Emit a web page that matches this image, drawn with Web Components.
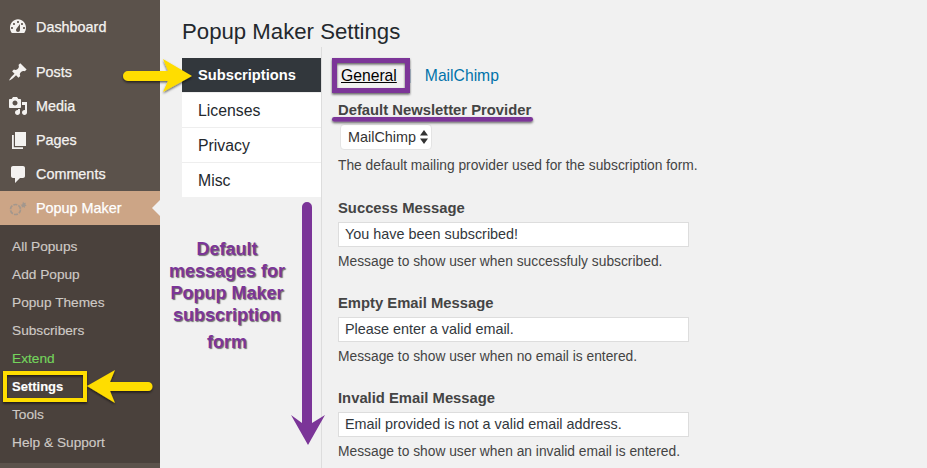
<!DOCTYPE html>
<html>
<head>
<meta charset="utf-8">
<title>Popup Maker Settings</title>
<style>
  html, body { margin: 0; height: 468px; overflow: hidden; background: #f1f1f1; }
  body { font-family: "Liberation Sans", Arial, sans-serif; color: #444; }
</style>
</head>
<body>
<settings-page>
  <admin-sidebar slot="sidebar">
    <menu-item icon="dashboard" class="first">Dashboard</menu-item>
    <menu-item icon="pin">Posts</menu-item>
    <menu-item icon="media">Media</menu-item>
    <menu-item icon="pages">Pages</menu-item>
    <menu-item icon="comment">Comments</menu-item>
    <menu-item icon="popup" current>Popup Maker</menu-item>
    <sub-menu>
      <sub-item>All Popups</sub-item>
      <sub-item>Add Popup</sub-item>
      <sub-item>Popup Themes</sub-item>
      <sub-item>Subscribers</sub-item>
      <sub-item tone="green">Extend</sub-item>
      <sub-item tone="current">Settings</sub-item>
      <sub-item>Tools</sub-item>
      <sub-item>Help &amp; Support</sub-item>
    </sub-menu>
  </admin-sidebar>

  <vertical-tabs slot="tabs">
    <tab-item active>Subscriptions</tab-item>
    <tab-item>Licenses</tab-item>
    <tab-item>Privacy</tab-item>
    <tab-item>Misc</tab-item>
  </vertical-tabs>

  <sub-tabs slot="subtabs"></sub-tabs>

  <select-field label="Default Newsletter Provider" value="MailChimp" hint="The default mailing provider used for the subscription form."></select-field>
  <text-field label="Success Message" value="You have been subscribed!" hint="Message to show user when successfuly subscribed."></text-field>
  <text-field label="Empty Email Message" value="Please enter a valid email." hint="Message to show user when no email is entered."></text-field>
  <text-field label="Invalid Email Message" value="Email provided is not a valid email address." hint="Message to show user when an invalid email is entered."></text-field>
</settings-page>
<markup-layer></markup-layer>

<script>
const ICONS = {
  dashboard: '<path fill-rule="evenodd" d="M3.76 16h12.48C17.34 14.57 18 12.79 18 10.86c0-4.71-3.58-8.53-8-8.53s-8 3.82-8 8.53c0 1.93.66 3.71 1.76 5.14zM10 4c.55 0 1 .45 1 1s-.45 1-1 1-1-.45-1-1 .45-1 1-1zM6 6c.55 0 1 .45 1 1s-.45 1-1 1-1-.45-1-1 .45-1 1-1zm8 0c.55 0 1 .45 1 1s-.45 1-1 1-1-.45-1-1 .45-1 1-1zm-5.37 5.55L12 7v6c0 1.1-.9 2-2 2s-2-.9-2-2c0-.57.24-1.08.63-1.45zM4 10c.55 0 1 .45 1 1s-.45 1-1 1-1-.45-1-1 .45-1 1-1zm12 0c.55 0 1 .45 1 1s-.45 1-1 1-1-.45-1-1 .45-1 1-1z"/>',
  pin: '<path d="M10.44 3.02l1.82-1.82 6.36 6.35-1.83 1.82c-1.05-.68-2.48-.57-3.41.36l-.75.75c-.92.93-1.04 2.35-.35 3.41l-1.83 1.82-2.41-2.41-2.8 2.79c-.42.42-3.38 2.71-3.8 2.29s1.86-3.39 2.28-3.81l2.79-2.79L4.1 9.36l1.83-1.82c1.05.69 2.48.57 3.4-.36l.75-.75c.93-.92 1.05-2.35.36-3.41z"/>',
  media: '<path fill-rule="evenodd" d="M13 11V4c0-.55-.45-1-1-1h-1.67L9 1H5L3.67 3H2c-.55 0-1 .45-1 1v7c0 .55.45 1 1 1h10c.55 0 1-.45 1-1zM7 4.5c1.38 0 2.5 1.12 2.5 2.5S8.38 9.5 7 9.5 4.5 8.38 4.5 7 5.62 4.5 7 4.5z"/><path d="M14 6h5v10.500c0 1.380-1.120 2.500-2.500 2.500S14 17.880 14 16.500s1.120-2.500 2.500-2.500c.17 0 .34.020.5.050V9h-3V6zm-4 8.050V13h2v3.500c0 1.380-1.120 2.500-2.500 2.500S7 17.880 7 16.500 8.120 14 9.500 14c.17 0 .34.020.5.050z"/>',
  pages: '<path d="M7 2h11v14H7z"/><path d="M4 5h1.800v12.200H15V19H4z"/>',
  comment: '<path d="M5 2h10c1.100 0 2 .9 2 2v8c0 1.100-.9 2-2 2h-3l-5 5v-5H5c-1.100 0-2-.9-2-2V4c0-1.100.9-2 2-2z"/>',
  popup: '<circle cx="7.500" cy="11.500" r="5" fill="none" stroke="currentColor" stroke-width="1.700" stroke-dasharray="4 1.200"/><path d="M15 3.500l1 1.500 1.800-.2-.4 1.700 1.300 1.200-1.700.6-.3 1.700-1.500-1-1.600.8.200-1.800-1.300-1.200 1.800-.4z"/>'
};

class SettingsPage extends HTMLElement {
  constructor() {
    super();
    this.attachShadow({ mode: 'open' }).innerHTML = `
      <style>
        :host { display: flex; width: 927px; height: 468px; overflow: hidden; }
        #main { flex: 1; padding: 18px 0 0 22px; min-width: 0; }
        h1 { margin: 0; height: 29px; font-size: 22.200px; line-height: 27px; font-weight: 400; color: #23282d; }
        #panel { display: flex; }
        #content { flex: 1; padding: 11px 0 0 16px; border-left: 1px solid #ddd; height: 421px; box-sizing: border-box; }
      </style>
      <slot name="sidebar"></slot>
      <div id="main">
        <h1>Popup Maker Settings</h1>
        <div id="panel">
          <slot name="tabs"></slot>
          <div id="content">
            <slot name="subtabs"></slot>
            <slot></slot>
          </div>
        </div>
      </div>`;
  }
}

class AdminSidebar extends HTMLElement {
  constructor() {
    super();
    this.attachShadow({ mode: 'open' }).innerHTML = `
      <style>
        :host { display: block; flex: none; width: 160px; height: 468px; background: #5b524b; padding-top: 10px; box-sizing: border-box; }
        ::slotted(.first) { margin-bottom: 11px; }
      </style>
      <slot></slot>`;
  }
}

class MenuItem extends HTMLElement {
  connectedCallback() {
    if (this.shadowRoot) return;
    const icon = ICONS[this.getAttribute('icon')] || '';
    this.attachShadow({ mode: 'open' }).innerHTML = `
      <style>
        :host { display: flex; position: relative; align-items: center; height: 34px; color: #f4f2f0; font-size: 14.400px; -webkit-text-stroke: 0.25px currentColor; }
        :host([current]) { background: #cca586; color: #fff; }
        :host([current]) svg { color: #a3978d; fill: #a3978d; }
        svg { width: 20px; height: 20px; margin: 0 8px; fill: #f4f2f0; flex: none; }
        :host([current])::after { content: ""; position: absolute; right: 0; top: 9px; border: 8px solid transparent; border-right-color: #f1f1f1; border-left-width: 0; }
      </style>
      <svg viewBox="0 0 20 20">${icon}</svg><slot></slot>`;
  }
}

class SubMenu extends HTMLElement {
  constructor() {
    super();
    this.attachShadow({ mode: 'open' }).innerHTML = `
      <style>:host { display: block; background: #4a413c; padding: 8px 0 6px; }</style>
      <slot></slot>`;
  }
}

class SubItem extends HTMLElement {
  constructor() {
    super();
    this.attachShadow({ mode: 'open' }).innerHTML = `
      <style>
        :host { display: block; height: 28px; line-height: 28px; padding-left: 12px; font-size: 13.700px; color: #cfcac6; -webkit-text-stroke: 0.15px currentColor; }
        :host([tone="green"]) { color: #74d45c; }
        :host([tone="current"]) { color: #fff; font-weight: 700; font-size: 13px; }
      </style>
      <slot></slot>`;
  }
}

class VerticalTabs extends HTMLElement {
  constructor() {
    super();
    this.attachShadow({ mode: 'open' }).innerHTML = `
      <style>:host { display: block; flex: none; width: 139px; margin-top: 11px; align-self: flex-start; background: #fff; }</style>
      <slot></slot>`;
  }
}

class TabItem extends HTMLElement {
  constructor() {
    super();
    this.attachShadow({ mode: 'open' }).innerHTML = `
      <style>
        :host { display: block; height: 34px; line-height: 36px; padding-left: 16px; font-size: 15.800px; color: #23282d; border-bottom: 1px solid #eee; background: #fff; }
        :host(:last-child) { border-bottom: 0; }
        :host([active]) { background: #32373c; color: #fff; font-weight: 700; font-size: 14.700px; line-height: 34px; }
      </style>
      <slot></slot>`;
  }
}

class SubTabs extends HTMLElement {
  constructor() {
    super();
    this.attachShadow({ mode: 'open' }).innerHTML = `
      <style>
        :host { display: flex; align-items: center; height: 34px; padding-top: 2px; box-sizing: border-box; font-size: 15.700px; }
        a { color: #0073aa; text-decoration: none; }
        a.on { color: #000; text-decoration: underline; margin-left: 3px; }
        i { width: 1px; height: 14px; background: #bcd; margin: 0 14px 0 13px; }
      </style>
      <a class="on">General</a><i></i><a>MailChimp</a>`;
  }
}

const fieldStyles = `
  :host { display: block; font-size: 13.800px; color: #444; }
  label { display: block; font-size: 14.800px; font-weight: 700; line-height: 18px; color: #444; }
  p { margin: 0; line-height: 18px; }
`;

class SelectField extends HTMLElement {
  connectedCallback() {
    if (this.shadowRoot) return;
    this.attachShadow({ mode: 'open' }).innerHTML = `
      <style>${fieldStyles}
        :host { height: 89px; padding-top: 9px; box-sizing: border-box; }
        #box { display: flex; align-items: center; justify-content: space-between; width: 92px; height: 26px; margin: 5px 0 7px 2px; box-sizing: border-box; padding: 0 3px 0 7px; background: #fff; border: 1px solid #e4e4e4; border-radius: 4px; font-size: 14.400px; color: #333; }
        svg { width: 8px; height: 14px; fill: #333; }
      </style>
      <label>${this.getAttribute('label')}</label>
      <div id="box">${this.getAttribute('value')}<svg viewBox="0 0 8 14"><path d="M4 0l4 5.500H0zM4 14L0 8.500h8z"/></svg></div>
      <p>${this.getAttribute('hint')}</p>`;
  }
}

class TextField extends HTMLElement {
  connectedCallback() {
    if (this.shadowRoot) return;
    this.attachShadow({ mode: 'open' }).innerHTML = `
      <style>${fieldStyles}
        :host { height: 95px; padding-top: 18px; box-sizing: border-box; }
        #input { width: 351px; height: 25px; line-height: 23px; margin: 5px 0 6px; box-sizing: border-box; padding: 0 6px; background: #fff; border: 1px solid #ddd; font-size: 14.400px; color: #32373c; }
      </style>
      <label>${this.getAttribute('label')}</label>
      <div id="input">${this.getAttribute('value')}</div>
      <p>${this.getAttribute('hint')}</p>`;
  }
}

// hand drawn annotations sit on top of the screenshot
class MarkupLayer extends HTMLElement {
  constructor() {
    super();
    this.attachShadow({ mode: 'open' }).innerHTML = `
      <style>
        :host { position: absolute; left: 0; top: 0; width: 927px; height: 468px; pointer-events: none; }
        svg { position: absolute; left: 0; top: 0; }
        #note { position: absolute; left: 167px; top: 238px; width: 120px; text-align: center; font-size: 18px; font-weight: 700; line-height: 22px; color: #7b3598; text-shadow: 1px 1px 1px rgba(0,0,0,.55), 0 0 2px rgba(255,255,255,.6); }
        #note div { margin-top: 5px; }
      </style>
      <svg width="927" height="468" viewBox="0 0 927 468">
        <defs>
          <filter id="s" x="-20%" y="-20%" width="140%" height="140%">
            <feDropShadow dx="0" dy="1.500" stdDeviation="1.200" flood-color="#000" flood-opacity=".6"/>
          </filter>
        </defs>
        <g filter="url(#s)">
          <path fill="#ffdd00" d="M128 71H168L163 59 192 76 163 92 168 81H128a5 5 0 0 1 0-10z"/>
          <rect x="5" y="373" width="80" height="27" fill="none" stroke="#ffdd00" stroke-width="4"/>
          <path fill="#ffdd00" d="M148 382H110L115 370 87 386 115 403 110 391H148a4.500 4.500 0 0 0 0-9z"/>
          <rect x="334.500" y="60.500" width="73" height="30" fill="none" stroke="#7b3598" stroke-width="5"/>
          <rect x="332" y="117" width="201" height="4.500" rx="2.200" fill="#7b3598"/>
        </g>
        <path fill="#7b3598" d="M302 207a5 5 0 0 1 10 0V423L325 415 308 445 291 415 302 423z"/>
      </svg>
      <div id="note">Default<br>messages for<br>Popup Maker<br>subscription<div>form</div></div>`;
  }
}

customElements.define('settings-page', SettingsPage);
customElements.define('admin-sidebar', AdminSidebar);
customElements.define('menu-item', MenuItem);
customElements.define('sub-menu', SubMenu);
customElements.define('sub-item', SubItem);
customElements.define('vertical-tabs', VerticalTabs);
customElements.define('tab-item', TabItem);
customElements.define('sub-tabs', SubTabs);
customElements.define('select-field', SelectField);
customElements.define('text-field', TextField);
customElements.define('markup-layer', MarkupLayer);
</script>
</body>
</html>
